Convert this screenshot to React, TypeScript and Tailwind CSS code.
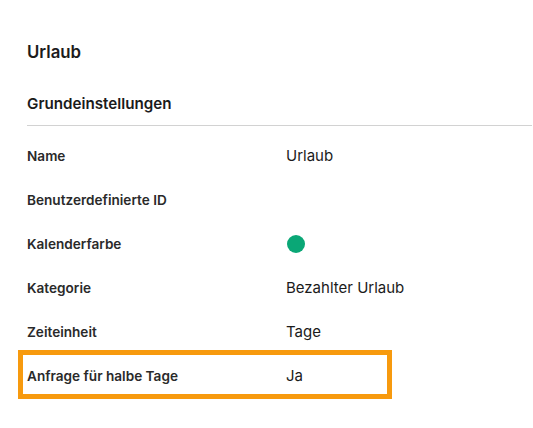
const rows: { label: string; value?: string; color?: boolean; highlight?: boolean }[] = [
  { label: "Name", value: "Urlaub" },
  { label: "Benutzerdefinierte ID" },
  { label: "Kalenderfarbe", color: true },
  { label: "Kategorie", value: "Bezahlter Urlaub" },
  { label: "Zeiteinheit", value: "Tage" },
  { label: "Anfrage für halbe Tage", value: "Ja", highlight: true },
];

export default function App() {
  return (
    <div className="w-[533px] h-[428px] bg-white pl-[27px] pt-[40px] font-['Inter',sans-serif] text-[#1b1b1b]">
      <h1 className="text-[16.8px] leading-[24px] font-semibold">Urlaub</h1>
      <h2 className="mt-[28px] text-[15.2px] leading-[24px] font-semibold">Grundeinstellungen</h2>
      <div className="mt-[9px] h-px bg-[#d2d2d2] mr-px" />
      <div className="mt-[8px]">
        {rows.map((r) => (
          <div key={r.label} className="relative flex items-center h-[44px]">
            {r.highlight && (
              <div className="absolute left-[-9px] top-[-4px] w-[374px] h-[49px] border-[5px] border-[#f79a0e]" />
            )}
            <div className="w-[259px] text-[13.6px] font-semibold text-[#2a2a2a]">{r.label}</div>
            {r.value && <div className="text-[15px] text-[#1b1b1b]">{r.value}</div>}
            {r.color && <div className="ml-px w-[18px] h-[18px] rounded-full bg-[#0aa776]" />}
          </div>
        ))}
      </div>
    </div>
  );
}
